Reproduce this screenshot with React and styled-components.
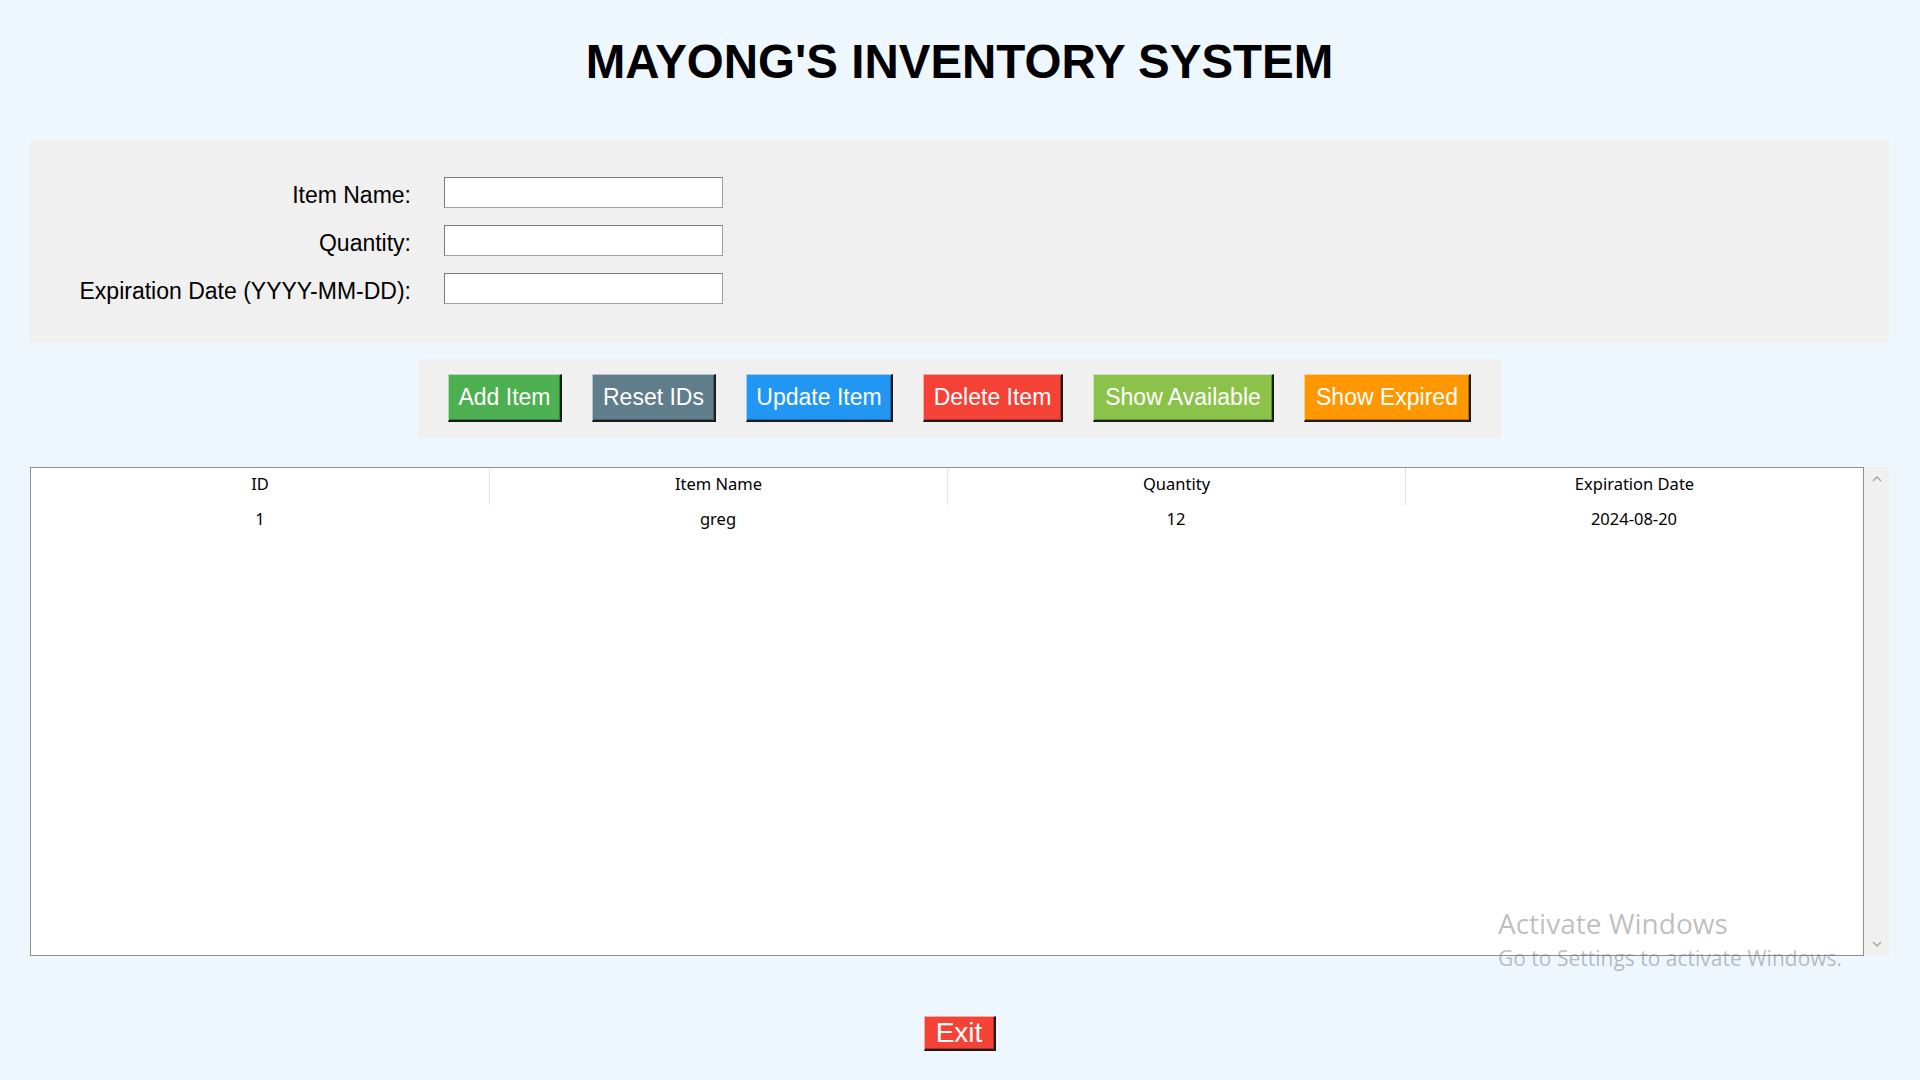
import React from 'react'
import styled, { createGlobalStyle } from 'styled-components'

const GlobalStyle = createGlobalStyle`
	html, body {
		margin: 0;
		padding: 0;
		background: #eff7fe;
	}
	body {
		font-family: "Liberation Sans", Arial, sans-serif;
	}
`

const Page = styled.div`
	position: relative;
	width: 1920px;
	height: 1080px;
	padding: 35px 31px 0 30px;
	box-sizing: border-box;
	display: flex;
	flex-direction: column;
	overflow: hidden;
`

const Title = styled.h1`
	margin: 0 0 51px 0;
	height: 54px;
	line-height: 54px;
	text-align: center;
	font-size: 47.5px;
	font-weight: bold;
	color: #000;
`

const FormPanel = styled.div`
	background: #f0f0f0;
	padding: 37px 0 39px;
	display: grid;
	grid-template-columns: 381px 279px;
	grid-auto-rows: 31px;
	column-gap: 33px;
	row-gap: 17px;
`

const Label = styled.label`
	height: 31px;
	text-align: right;
	font-size: 23px;
	line-height: 36px;
	color: #000;
`

const Entry = styled.input`
	box-sizing: border-box;
	height: 31px;
	width: 279px;
	margin: 0;
	padding: 0 4px;
	background: #fff;
	border: 1px solid #a0a0a0;
	border-top-color: #7a7a7a;
	border-left-color: #7a7a7a;
	font-size: 18px;
	outline: none;
`

const ButtonBar = styled.div`
	align-self: center;
	display: flex;
	gap: 30px;
	margin-top: 16px;
	padding: 15px 30px 16px;
	background: #f0f0f0;
`

const ActionButton = styled.button`
	box-sizing: border-box;
	width: ${p => p.$w}px;
	height: 48px;
	padding: 0;
	background: ${p => p.$bg};
	color: #fff;
	font-family: "Liberation Sans", Arial, sans-serif;
	font-size: ${p => p.$size || 23}px;
	line-height: 1;
	white-space: nowrap;
	border-style: solid;
	border-width: 1px 2px 2px 1px;
	border-color: rgba(255, 255, 255, 0.55) #1c1c1c #1c1c1c rgba(255, 255, 255, 0.55);
	box-shadow: inset -1px -1px 0 rgba(0, 0, 0, 0.28);
	cursor: pointer;
`

const ExitButton = styled(ActionButton)`
	align-self: center;
	height: 35px;
	margin-top: 60px;
`

const TableArea = styled.div`
	display: flex;
	height: 489px;
	margin-top: 29px;
`

const Table = styled.div`
	flex: 1;
	background: #fff;
	border: 1px solid #8e8e8e;
	font-family: "Noto Sans", "Open Sans", sans-serif;
	font-size: 16.5px;
	color: #000;
`

const HeaderRow = styled.div`
	display: grid;
	grid-template-columns: repeat(4, 1fr);
	height: 37px;
`

const HeadCell = styled.div`
	display: flex;
	align-items: center;
	justify-content: center;
	padding-bottom: 6px;
	box-sizing: border-box;
	border-left: ${p => (p.$first ? 'none' : '1px solid #e5e5e5')};
`

const DataRow = styled.div`
	display: grid;
	grid-template-columns: repeat(4, 1fr);
	height: 26px;
`

const Cell = styled.div`
	display: flex;
	align-items: center;
	justify-content: center;
`

const Scrollbar = styled.div`
	width: 25px;
	background: #f0f0f0;
	display: flex;
	flex-direction: column;
	justify-content: space-between;
	align-items: center;
	padding: 8px 0 8px;
	box-sizing: border-box;
`

const Watermark = styled.div`
	position: absolute;
	left: 1498px;
	top: 906px;
	font-family: "Open Sans", "Noto Sans", sans-serif;
	color: rgba(110, 110, 110, 0.45);
	pointer-events: none;
`

const WatermarkTitle = styled.div`
	font-size: 28px;
	line-height: 34px;
`

const WatermarkText = styled.div`
	font-size: 21px;
	line-height: 25px;
	margin-top: 6px;
`

const Chevron = ({ up }) => (
	<svg width="10" height="7" viewBox="0 0 10 7">
		<path d={up ? 'M1 6 L5 2 L9 6' : 'M1 1 L5 5 L9 1'} fill="none" stroke="#a3a3a3" strokeWidth="1.3" />
	</svg>
)

const buttons = [
	{ label: 'Add Item', bg: '#4caf50', w: 114 },
	{ label: 'Reset IDs', bg: '#607d8b', w: 124 },
	{ label: 'Update Item', bg: '#2196f3', w: 147 },
	{ label: 'Delete Item', bg: '#f44336', w: 140 },
	{ label: 'Show Available', bg: '#8bc34a', w: 181 },
	{ label: 'Show Expired', bg: '#ff9800', w: 167 },
]

const columns = ['ID', 'Item Name', 'Quantity', 'Expiration Date']
const rows = [['1', 'greg', '12', '2024-08-20']]

export default function App() {
	return (
		<Page>
			<GlobalStyle />
			<Title>MAYONG'S INVENTORY SYSTEM</Title>

			<FormPanel>
				<Label>Item Name:</Label>
				<Entry />
				<Label>Quantity:</Label>
				<Entry />
				<Label>Expiration Date (YYYY-MM-DD):</Label>
				<Entry />
			</FormPanel>

			<ButtonBar>
				{buttons.map(b => (
					<ActionButton key={b.label} $bg={b.bg} $w={b.w}>{b.label}</ActionButton>
				))}
			</ButtonBar>

			<TableArea>
				<Table>
					<HeaderRow>
						{columns.map((c, i) => (
							<HeadCell key={c} $first={i === 0}>{c}</HeadCell>
						))}
					</HeaderRow>
					{rows.map(r => (
						<DataRow key={r[0]}>
							{r.map((v, i) => <Cell key={i}>{v}</Cell>)}
						</DataRow>
					))}
				</Table>
				<Scrollbar>
					<Chevron up />
					<Chevron />
				</Scrollbar>
			</TableArea>

			<ExitButton $bg="#f44336" $size={28} $w={72}>Exit</ExitButton>

			<Watermark>
				<WatermarkTitle>Activate Windows</WatermarkTitle>
				<WatermarkText>Go to Settings to activate Windows.</WatermarkText>
			</Watermark>
		</Page>
	)
}
